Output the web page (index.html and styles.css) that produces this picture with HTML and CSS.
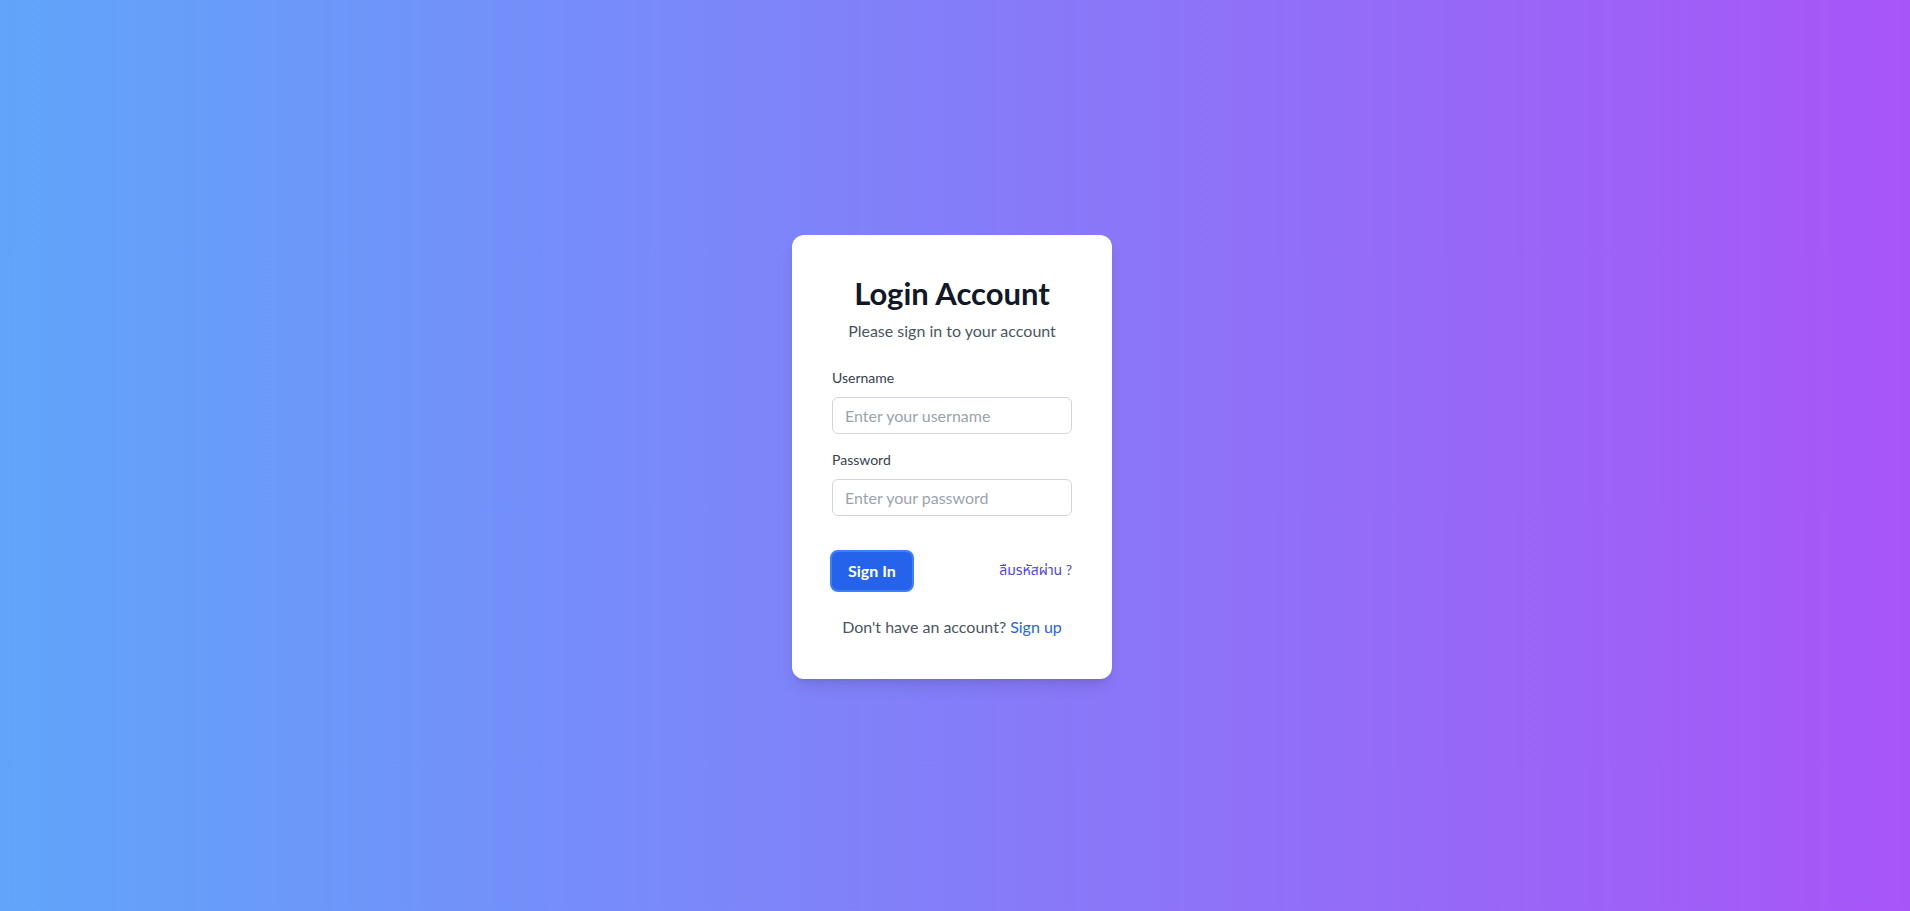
FILE: index.html
```html
<!DOCTYPE html>
<html lang="en">
<head>
<meta charset="UTF-8">
<meta name="viewport" content="width=device-width, initial-scale=1.0">
<title>Login</title>
<link rel="stylesheet" href="styles.css">
</head>
<body>
<div class="card">
  <h2>Login Account</h2>
  <p class="subtitle">Please sign in to your account</p>
  <form id="loginForm">
    <div class="form-group">
      <label for="username">Username</label>
      <input type="text" id="username" name="username" placeholder="Enter your username">
    </div>
    <div class="form-group">
      <label for="password">Password</label>
      <input type="password" id="password" name="password" placeholder="Enter your password">
    </div>
    <div class="actions">
      <button type="submit" class="btn">Sign In</button>
      <a href="#" class="forgot">ลืมรหัสผ่าน ?</a>
    </div>
  </form>
  <p class="signup">Don't have an account? <a href="#">Sign up</a></p>
</div>
</body>
</html>
```

FILE: styles.css
```css
html, body {
  height: 100%;
}
body {
  font-family: Lato, 'Noto Sans', 'Noto Sans Thai', sans-serif;
  background: linear-gradient(to right, #60a5fa, #a855f7);
  margin: 0;
  display: flex;
  justify-content: center;
  align-items: center;
}
.card {
  background-color: white;
  width: 320px;
  padding: 40px;
  margin: 2px 6px 0 0;
  box-sizing: border-box;
  border-radius: 12px;
  box-shadow: 0 10px 15px -3px rgba(0, 0, 0, 0.1), 0 4px 6px -4px rgba(0, 0, 0, 0.1);
}
.card h2 {
  margin: 0 0 8px;
  font-size: 31px;
  line-height: 36px;
  font-weight: 700;
  color: #111827;
  text-align: center;
}
.subtitle {
  margin: 0 0 25px;
  font-size: 16px;
  line-height: 24px;
  color: #4b5563;
  text-align: center;
}
.form-group {
  margin-bottom: 16px;
}
.form-group label {
  display: block;
  margin-bottom: 9px;
  font-size: 14px;
  line-height: 20px;
  color: #374151;
}
.form-group input {
  display: block;
  width: 100%;
  height: 37px;
  padding: 0 12px;
  border: 1px solid #d1d5db;
  border-radius: 6px;
  box-sizing: border-box;
  font-family: inherit;
  font-size: 16px;
  color: #111827;
}
.form-group input::placeholder {
  color: #9ca3af;
}
.actions {
  display: flex;
  justify-content: space-between;
  align-items: center;
  margin-top: 34px;
}
.btn {
  padding: 0 16px;
  height: 42px;
  margin-left: -2px;
  border: 2px solid #3b82f6;
  border-radius: 8px;
  background-color: #2563eb;
  color: white;
  font-family: inherit;
  font-size: 16px;
  font-weight: 700;
  cursor: pointer;
}
.forgot {
  font-size: 14px;
  color: #4f46e5;
  text-decoration: none;
}
.signup {
  margin: 23px 0 0;
  font-size: 16px;
  line-height: 24px;
  color: #4b5563;
  text-align: center;
}
.signup a {
  color: #2563eb;
  text-decoration: none;
}
```
